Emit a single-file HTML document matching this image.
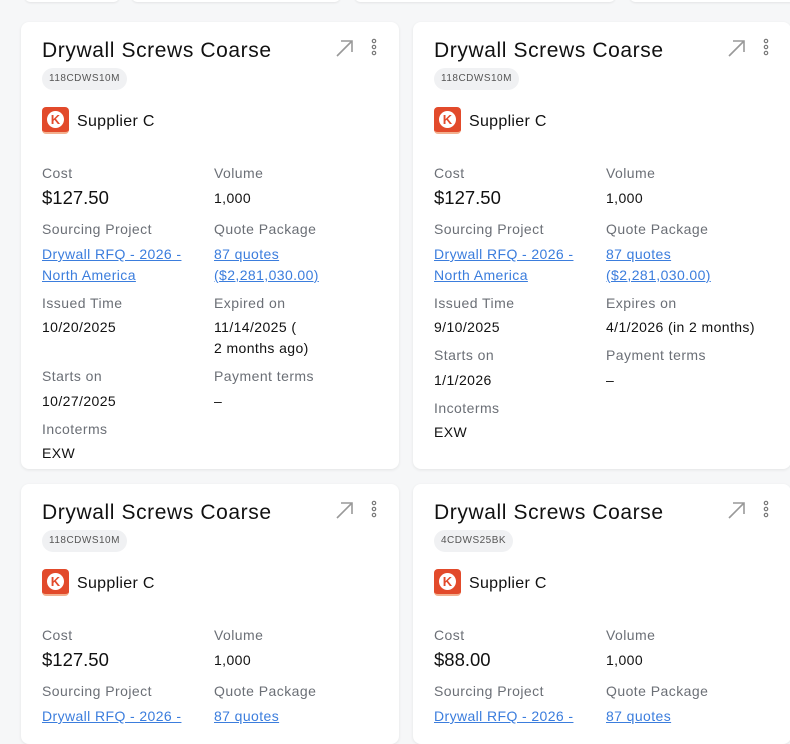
<!DOCTYPE html>
<html><head><meta charset="utf-8"><style>
*{margin:0;padding:0;box-sizing:border-box}
body{width:790px;height:724px;overflow:hidden;background:#f6f7f8;font-family:"Liberation Sans",sans-serif;position:relative;color:#111}
.stub{position:absolute;top:-8px;height:10px;background:#fff;border-radius:6px;box-shadow:0 1px 2px rgba(0,0,0,.08)}
.card{position:absolute;width:378px;background:#fff;border-radius:8px;box-shadow:0 1px 3px rgba(0,0,0,.08)}
.t{position:absolute;left:21px;top:17px;font-size:21px;color:#111;letter-spacing:.6px}
.pill{position:absolute;left:21px;top:46px;height:22px;line-height:22px;padding:0 7px;background:#f0f1f3;border-radius:11px;font-size:10px;color:#555;letter-spacing:.5px}
.logo{position:absolute;left:21px;top:85px;width:27px;height:27px;background:#e24a2b;border-radius:4px;border-bottom:2px solid #f3b08f}
.logo:after{content:"K";position:absolute;left:5px;top:4px;width:17px;height:17px;border-radius:50%;background:#fff;color:#e24a2b;font-weight:bold;font-size:13px;line-height:17px;text-align:center}
.sup{position:absolute;left:56px;top:91px;font-size:16px;letter-spacing:.3px}
.ic{position:absolute;left:313px;top:15px}
.l{position:absolute;font-size:14px;color:#6b6f76;letter-spacing:.45px}
.v{position:absolute;font-size:14px;line-height:21px;color:#111;letter-spacing:.4px}
.a{color:#3b7ddd;text-decoration:underline}
.big{font-size:18.5px;letter-spacing:0}
</style></head><body>
<div class="stub" style="left:25px;width:94px"></div>
<div class="stub" style="left:132px;width:208px"></div>
<div class="stub" style="left:355px;width:260px"></div>
<div class="stub" style="left:630px;width:170px"></div>

<div class="card" style="left:21px;top:22px;height:447px">
<div class="t">Drywall Screws Coarse</div><div class="pill">118CDWS10M</div>
<svg class="ic" width="60" height="24"><path d="M3 19L18 4M7 4H18V15" stroke="#999" stroke-width="1.6" fill="none"/><circle cx="40" cy="4" r="1.7" fill="none" stroke="#777" stroke-width="1.2"/><circle cx="40" cy="10" r="1.7" fill="none" stroke="#777" stroke-width="1.2"/><circle cx="40" cy="16" r="1.7" fill="none" stroke="#777" stroke-width="1.2"/></svg>
<div class="logo"></div><div class="sup">Supplier C</div>
<div class="l" style="left:21px;top:143px">Cost</div><div class="l" style="left:193px;top:143px">Volume</div>
<div class="v big" style="left:21px;top:165px">$127.50</div><div class="v" style="left:193px;top:166px">1,000</div>
<div class="l" style="left:21px;top:199px">Sourcing Project</div><div class="l" style="left:193px;top:199px">Quote Package</div>
<div class="v a" style="left:21px;top:222px">Drywall RFQ - 2026 -<br>North America</div><div class="v a" style="left:193px;top:222px">87 quotes<br>($2,281,030.00)</div>
<div class="l" style="left:21px;top:273px">Issued Time</div><div class="l" style="left:193px;top:273px">Expired on</div>
<div class="v" style="left:21px;top:295px">10/20/2025</div><div class="v" style="left:193px;top:295px">11/14/2025 (<br>2 months ago)</div>
<div class="l" style="left:21px;top:346px">Starts on</div><div class="l" style="left:193px;top:346px">Payment terms</div>
<div class="v" style="left:21px;top:369px">10/27/2025</div><div class="v" style="left:193px;top:369px">–</div>
<div class="l" style="left:21px;top:399px">Incoterms</div>
<div class="v" style="left:21px;top:421px">EXW</div>
</div>

<div class="card" style="left:413px;top:22px;height:447px">
<div class="t">Drywall Screws Coarse</div><div class="pill">118CDWS10M</div>
<svg class="ic" width="60" height="24"><path d="M3 19L18 4M7 4H18V15" stroke="#999" stroke-width="1.6" fill="none"/><circle cx="40" cy="4" r="1.7" fill="none" stroke="#777" stroke-width="1.2"/><circle cx="40" cy="10" r="1.7" fill="none" stroke="#777" stroke-width="1.2"/><circle cx="40" cy="16" r="1.7" fill="none" stroke="#777" stroke-width="1.2"/></svg>
<div class="logo"></div><div class="sup">Supplier C</div>
<div class="l" style="left:21px;top:143px">Cost</div><div class="l" style="left:193px;top:143px">Volume</div>
<div class="v big" style="left:21px;top:165px">$127.50</div><div class="v" style="left:193px;top:166px">1,000</div>
<div class="l" style="left:21px;top:199px">Sourcing Project</div><div class="l" style="left:193px;top:199px">Quote Package</div>
<div class="v a" style="left:21px;top:222px">Drywall RFQ - 2026 -<br>North America</div><div class="v a" style="left:193px;top:222px">87 quotes<br>($2,281,030.00)</div>
<div class="l" style="left:21px;top:273px">Issued Time</div><div class="l" style="left:193px;top:273px">Expires on</div>
<div class="v" style="left:21px;top:295px">9/10/2025</div><div class="v" style="left:193px;top:295px">4/1/2026 (in 2 months)</div>
<div class="l" style="left:21px;top:325px">Starts on</div><div class="l" style="left:193px;top:325px">Payment terms</div>
<div class="v" style="left:21px;top:348px">1/1/2026</div><div class="v" style="left:193px;top:348px">–</div>
<div class="l" style="left:21px;top:378px">Incoterms</div>
<div class="v" style="left:21px;top:400px">EXW</div>
</div>

<div class="card" style="left:21px;top:484px;height:260px">
<div class="t">Drywall Screws Coarse</div><div class="pill">118CDWS10M</div>
<svg class="ic" width="60" height="24"><path d="M3 19L18 4M7 4H18V15" stroke="#999" stroke-width="1.6" fill="none"/><circle cx="40" cy="4" r="1.7" fill="none" stroke="#777" stroke-width="1.2"/><circle cx="40" cy="10" r="1.7" fill="none" stroke="#777" stroke-width="1.2"/><circle cx="40" cy="16" r="1.7" fill="none" stroke="#777" stroke-width="1.2"/></svg>
<div class="logo"></div><div class="sup">Supplier C</div>
<div class="l" style="left:21px;top:143px">Cost</div><div class="l" style="left:193px;top:143px">Volume</div>
<div class="v big" style="left:21px;top:165px">$127.50</div><div class="v" style="left:193px;top:166px">1,000</div>
<div class="l" style="left:21px;top:199px">Sourcing Project</div><div class="l" style="left:193px;top:199px">Quote Package</div>
<div class="v a" style="left:21px;top:222px">Drywall RFQ - 2026 -</div><div class="v a" style="left:193px;top:222px">87 quotes</div>
</div>

<div class="card" style="left:413px;top:484px;height:260px">
<div class="t">Drywall Screws Coarse</div><div class="pill">4CDWS25BK</div>
<svg class="ic" width="60" height="24"><path d="M3 19L18 4M7 4H18V15" stroke="#999" stroke-width="1.6" fill="none"/><circle cx="40" cy="4" r="1.7" fill="none" stroke="#777" stroke-width="1.2"/><circle cx="40" cy="10" r="1.7" fill="none" stroke="#777" stroke-width="1.2"/><circle cx="40" cy="16" r="1.7" fill="none" stroke="#777" stroke-width="1.2"/></svg>
<div class="logo"></div><div class="sup">Supplier C</div>
<div class="l" style="left:21px;top:143px">Cost</div><div class="l" style="left:193px;top:143px">Volume</div>
<div class="v big" style="left:21px;top:165px">$88.00</div><div class="v" style="left:193px;top:166px">1,000</div>
<div class="l" style="left:21px;top:199px">Sourcing Project</div><div class="l" style="left:193px;top:199px">Quote Package</div>
<div class="v a" style="left:21px;top:222px">Drywall RFQ - 2026 -</div><div class="v a" style="left:193px;top:222px">87 quotes</div>
</div>
</body></html>
